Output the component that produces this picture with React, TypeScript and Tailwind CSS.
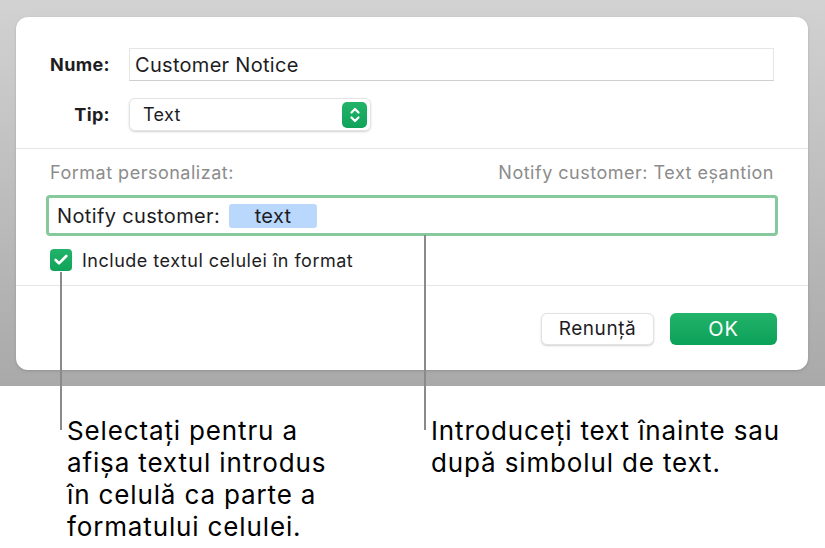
import { Check } from 'lucide-react';

// Dialog "Format personalizat" cu explicații dedesubt
export default function App() {
  return (
    <div className="relative w-[825px] h-[548px] bg-white overflow-hidden font-['Inter','Noto_Sans',sans-serif] text-[#1d1d1f]">
      {/* fundal gri + fereastra */}
      <div className="h-[386px] bg-gradient-to-b from-[#d2d2d2] to-[#a9a9a9] pt-[17px] pl-[16px] pr-[17px]">
        <div className="h-[353px] bg-white rounded-[12px] flex flex-col shadow-[0_1px_3px_rgba(0,0,0,0.15)]">
          {/* Nume */}
          <div className="flex items-center mt-[31px]">
            <div className="w-[94px] text-right text-[18px] font-bold tracking-[0.02em]">Nume:</div>
            <div className="ml-[19px] mr-[34px] flex-1 h-[33px] flex items-center px-[5px] border border-[#e6e6e6] border-b-[#cfcfcf] text-[20px] tracking-[0.015em]">
              Customer Notice
            </div>
          </div>

          {/* Tip */}
          <div className="flex items-center mt-[17px]">
            <div className="w-[94px] text-right text-[18px] font-bold tracking-[0.02em]">Tip:</div>
            <div className="ml-[19px] w-[242px] h-[33px] rounded-[6px] border border-[#e4e4e4] shadow-[0_1px_2px_rgba(0,0,0,0.18)] flex items-center justify-between pl-[13px] pr-[3px] text-[18px] tracking-[0.02em]">
              <span>Text</span>
              <div className="w-[25px] h-[26px] rounded-[5px] bg-gradient-to-b from-[#22b36b] to-[#0fa35a] flex items-center justify-center">
                <svg width="12" height="18" viewBox="0 0 12 18" fill="none" stroke="white" strokeWidth="2.2" strokeLinecap="round" strokeLinejoin="round">
                  <path d="M2.5 6.5 L6 3 L9.5 6.5" />
                  <path d="M2.5 11.5 L6 15 L9.5 11.5" />
                </svg>
              </div>
            </div>
          </div>

          <div className="mt-[17px] border-t border-[#e5e5e5]" />

          {/* Format personalizat */}
          <div className="flex justify-between items-center px-[34px] mt-[13px] text-[18px] tracking-[0.028em] text-[#8c8c8c] leading-[22px]">
            <span>Format personalizat:</span>
            <span>Notify customer: Text eșantion</span>
          </div>

          <div className="mt-[11px] ml-[30px] mr-[30px] h-[41px] rounded-[4px] border-[3px] border-[#86c99c] flex items-center pl-[8px] text-[20px] tracking-[0.018em]">
            <span>Notify customer:</span>
            <span className="ml-[9px] w-[88px] h-[24px] rounded-[3px] bg-[#b9d8fc] flex items-center justify-center">text</span>
          </div>

          <div className="flex items-center h-[22px] ml-[34px] mt-[13px]">
            <div className="w-[22px] h-[22px] rounded-[4px] bg-gradient-to-b from-[#22b36b] to-[#0fa35a] flex items-center justify-center">
              <Check className="w-[16px] h-[16px] text-white" strokeWidth={4} />
            </div>
            <span className="ml-[10px] text-[18px] tracking-[0.028em]">Include textul celulei în format</span>
          </div>

          <div className="mt-[14px] border-t border-[#e5e5e5]" />

          {/* butoane */}
          <div className="flex justify-end gap-[16px] mr-[31px] mt-[27px]">
            <button className="w-[113px] h-[32px] rounded-[6px] bg-white border border-[#e2e2e2] shadow-[0_1px_2px_rgba(0,0,0,0.18)] text-[19px] tracking-[0.03em]">
              Renunță
            </button>
            <button className="w-[107px] h-[32px] rounded-[6px] bg-gradient-to-b from-[#22b36b] to-[#0aa158] text-white text-[20px] tracking-[0.04em]">
              OK
            </button>
          </div>
        </div>
      </div>

      {/* linii de legătură */}
      <div className="absolute left-[60px] top-[272px] w-[2px] h-[158px] bg-[#8a8a8a]" />
      <div className="absolute left-[424px] top-[235px] w-[2px] h-[195px] bg-[#8a8a8a]" />

      {/* explicații */}
      <div className="flex text-[26px] tracking-[0.033em] leading-[32px] text-black mt-[29px]">
        <p className="ml-[67px] w-[340px]">
          Selectați pentru a<br />
          afișa textul introdus<br />
          în celulă ca parte a<br />
          formatului celulei.
        </p>
        <p className="ml-[24px]">
          Introduceți text înainte sau<br />
          după simbolul de text.
        </p>
      </div>
    </div>
  );
}
